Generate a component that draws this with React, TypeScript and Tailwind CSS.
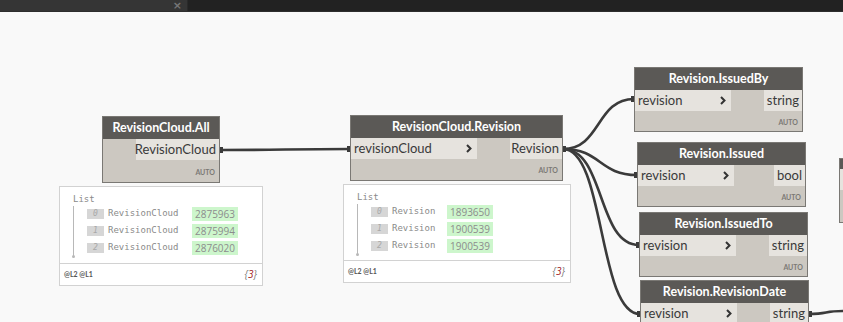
import React from 'react';

interface NodeProps {
    pos: string;
    title: string;
    input?: string;
    inputW?: string;
    output: string;
    outputW: string;
}

const Chevron = () => (
    <svg width="6" height="9" viewBox="0 0 6 9" className="shrink-0">
        <path d="M1 1l3.5 3.5L1 8" fill="none" stroke="#333" strokeWidth={2} />
    </svg>
);

const Node: React.FC<NodeProps> = ({ pos, title, input, inputW, output, outputW }) => (
    <div className={`absolute flex flex-col border border-[#7a7874] bg-[#ccc8c1] ${pos}`}>
        <div className="h-[22px] bg-[#5b5956] flex items-center justify-center text-white text-[12.5px] font-bold font-['Lato',sans-serif] leading-none">
            {title}
        </div>
        <div className="h-[21px] flex justify-between items-stretch">
            {input ? (
                <div className={`bg-[#e6e3de] flex items-center justify-between pl-[3px] pr-[5px] text-[13px] text-[#3a3a3a] font-['Lato',sans-serif] ${inputW}`}>
                    <span>{input}</span>
                    <Chevron />
                </div>
            ) : <div />}
            <div className={`bg-[#e6e3de] flex items-center justify-end pr-[3px] text-[13px] text-[#3a3a3a] font-['Lato',sans-serif] ${outputW}`}>
                {output}
            </div>
        </div>
        <div className="flex-1 flex items-center justify-end pr-[4px] pt-[2px] text-[7px] font-bold text-[#7b7975] font-['Lato',sans-serif]">
            AUTO
        </div>
    </div>
);

interface WatchProps {
    pos: string;
    label: string;
    labelW: string;
    values: string[];
}

const Watch: React.FC<WatchProps> = ({ pos, label, labelW, values }) => (
    <div className={`absolute bg-white border border-[#d2d2d2] flex flex-col ${pos}`}>
        <div className="flex-1 pl-[13px] pt-[6px] font-['DejaVu_Sans_Mono',monospace] text-[9px] text-[#8a8a8a]">
            <div className="leading-[12px]">List</div>
            <div className="flex pt-[1px]">
                <div className="relative w-[14px] flex flex-col items-center">
                    <div className="w-px bg-[#b8b8b8] h-[50px] -ml-[13px]" />
                    <div className="w-[3px] h-[3px] rounded-full bg-[#b8b8b8] -ml-[13px] -mt-[1px]" />
                </div>
                <div className="flex flex-col gap-[2px] -ml-[13px] pl-[13px]">
                    {values.map((v, i) => (
                        <div key={i} className="flex items-center h-[15px]">
                            <div className="w-[17px] h-[10px] bg-[#d6d6d6] text-[#a8a8a8] italic text-[8px] flex items-center justify-center leading-none">{i}</div>
                            <div className={`pl-[4px] leading-none ${labelW}`}>{label}</div>
                            <div className="h-[14px] px-[3px] bg-[#cdf6cc] text-[#8c8c8c] text-[10px] font-['Open_Sans',sans-serif] flex items-center leading-none">{v}</div>
                        </div>
                    ))}
                </div>
            </div>
        </div>
        <div className="h-[22px] border-t border-[#d2d2d2] flex items-center justify-between px-[4px]">
            <span className="text-[7px] font-bold text-[#555] font-['Lato',sans-serif]">@L2 @L1</span>
            <span className="text-[10px] italic text-[#777] font-['Open_Sans',sans-serif] pr-[1px]">{'{'}<span className="text-[#a01818]">3</span>{'}'}</span>
        </div>
    </div>
);

const wire = (x1: number, y1: number, x2: number, y2: number, d = 40) =>
    `M${x1} ${y1} C${x1 + d} ${y1} ${x2 - d} ${y2} ${x2} ${y2}`;

export default function App() {
    return (
        <div className="w-[843px] h-[322px] overflow-hidden bg-[#f9f9f9] flex flex-col">
            {/* tab strip */}
            <div className="h-[12px] bg-[#222222] flex shrink-0 border-b border-[#2e2e2e]">
                <div className="w-[188px] bg-[#353535] flex items-center justify-end pr-[5px] border-r border-[#2a2a2a]">
                    <span className="text-[#777] text-[11px] leading-none font-['DejaVu_Sans',sans-serif] font-bold">×</span>
                </div>
            </div>

            {/* canvas */}
            <div className="relative flex-1">
                <svg className="absolute inset-0 w-[843px] h-[322px] -top-[12px]" width="843" height="322">
                    <g fill="none" stroke="#3b3b3b" strokeWidth={2.6} strokeLinecap="round">
                        <path d={wire(220, 150, 350, 149, 60)} />
                        <path d={wire(563, 149, 634, 99, 38)} />
                        <path d={wire(563, 149, 637, 175, 38)} />
                        <path d={wire(563, 149, 639, 245, 42)} />
                        <path d={wire(563, 149, 640, 314, 42)} />
                        <path d={wire(809, 314, 843, 311, 20)} />
                    </g>
                    <g fill="#3b3b3b">
                        <rect x="218" y="147" width="5" height="6" />
                        <rect x="347" y="146" width="4" height="6" />
                        <rect x="561" y="146" width="5" height="6" />
                        <rect x="631" y="96" width="4" height="6" />
                        <rect x="634" y="172" width="4" height="6" />
                        <rect x="636" y="242" width="4" height="6" />
                        <rect x="637" y="311" width="4" height="6" />
                        <rect x="807" y="311" width="5" height="6" />
                    </g>
                </svg>

                <Node pos="left-[102px] top-[104px] w-[118px] h-[67px]" title="RevisionCloud.All" output="RevisionCloud" outputW="w-[83px]" />
                <Node pos="left-[350px] top-[103px] w-[213px] h-[66px]" title="RevisionCloud.Revision" input="revisionCloud" inputW="w-[126px]" output="Revision" outputW="w-[52px]" />
                <Node pos="left-[634px] top-[55px] w-[169px] h-[65px]" title="Revision.IssuedBy" input="revision" inputW="w-[96px]" output="string" outputW="w-[38px]" />
                <Node pos="left-[637px] top-[130px] w-[169px] h-[65px]" title="Revision.Issued" input="revision" inputW="w-[96px]" output="bool" outputW="w-[31px]" />
                <Node pos="left-[639px] top-[200px] w-[169px] h-[65px]" title="Revision.IssuedTo" input="revision" inputW="w-[96px]" output="string" outputW="w-[38px]" />
                <Node pos="left-[640px] top-[268px] w-[169px] h-[65px]" title="Revision.RevisionDate" input="revision" inputW="w-[96px]" output="string" outputW="w-[38px]" />

                {/* partially visible node at right edge */}
                <div className="absolute left-[839px] top-[146px] w-[20px] h-[65px] border border-[#7a7874] bg-[#ccc8c1] flex flex-col">
                    <div className="h-[10px] bg-[#5b5956]" />
                    <div className="h-[21px] bg-[#e6e3de]" />
                </div>

                <Watch pos="left-[59px] top-[174px] w-[204px] h-[100px]" label="RevisionCloud" labelW="w-[88px]" values={['2875963', '2875994', '2876020']} />
                <Watch pos="left-[343px] top-[172px] w-[228px] h-[99px]" label="Revision" labelW="w-[59px]" values={['1893650', '1900539', '1900539']} />
            </div>
        </div>
    );
}
